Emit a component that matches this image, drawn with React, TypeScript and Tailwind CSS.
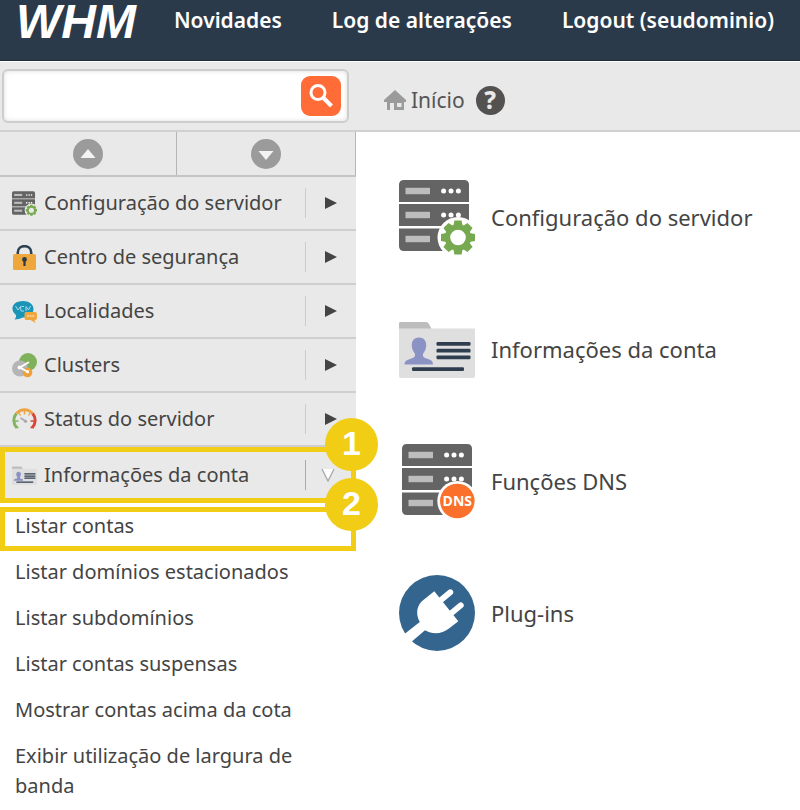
import React from 'react';

type IconProps = { className?: string };

function ServerBase({ x = 0 }: { x?: number }) {
  return (
    <g transform={`translate(${x} 0)`}>
      <path d="M5 1H65Q70 1 70 6V23H0V6Q0 1 5 1Z" fill="#646464" />
      <path d="M0 25H70V47H0Z" fill="#646464" />
      <path d="M0 49.5H70V67Q70 72 65 72H5Q0 72 0 67Z" fill="#646464" />
      {[12, 36, 60].map((y) => (
        <g key={y}>
          <rect x="6.5" y={y - 3.2} width="24.5" height="6.4" fill="#bdbdbd" />
          <circle cx="44.6" cy={y} r="2.5" fill="#fff" />
          <circle cx="52" cy={y} r="2.5" fill="#fff" />
          <circle cx="59.4" cy={y} r="2.5" fill="#fff" />
        </g>
      ))}
    </g>
  );
}

function ServerGearIcon({ className, halo = '#fff' }: IconProps & { halo?: string }) {
  return (
    <svg viewBox="0 0 76 76" className={className} aria-hidden="true">
      <ServerBase />
      <circle cx="59" cy="58.5" r="20.5" fill={halo} />
      {[0, 45, 90, 135].map((a) => (
        <path key={a} d="M55.4 41.5H62.6L63.6 47V70L62.6 75.5H55.4L54.4 70V47Z" fill="#77a951" transform={`rotate(${a} 59 58.5)`} />
      ))}
      <circle cx="59" cy="58.5" r="13.2" fill="#77a951" />
      <circle cx="59" cy="58.5" r="7.8" fill={halo} />
    </svg>
  );
}

function FolderIcon({ className }: IconProps) {
  return (
    <svg viewBox="0 0 76 76" className={className} aria-hidden="true">
      <path d="M0 12Q0 11 2 11H27Q29 11 30 13L32.5 18H0Z" fill="#bdbdbd" />
      <path d="M0 17.5H76V65Q76 67 74 67H2Q0 67 0 65Z" fill="#dfdfdf" />
      <path d="M20 26.5C25 26.5 27.5 30 27.2 35C27 39 25 41 24 43C23.5 46 25.5 47 29 48C33 49 34 51 34 53.6H5.5C5.5 51 7 49 11 48C14.5 47 16.4 46 16 43C15 41 13 39 12.8 35C12.5 30 15 26.5 20 26.5Z" fill="#8b93c4" />
      <g fill="#2f3e4e">
        <rect x="37.5" y="31" width="34" height="3.8" rx="1.2" />
        <rect x="37.5" y="37.8" width="34" height="3.8" rx="1.2" />
        <rect x="37.5" y="44.4" width="34" height="3.8" rx="1.2" />
        <rect x="13" y="56.2" width="52" height="3.8" rx="1.2" />
      </g>
    </svg>
  );
}

function ServerDnsIcon({ className }: IconProps) {
  return (
    <svg viewBox="0 0 76 76" className={className} aria-hidden="true">
      <ServerBase x={3} />
      <circle cx="58.3" cy="58" r="20" fill="#fff" />
      <circle cx="58.3" cy="58" r="17.3" fill="#fb712b" />
      <text x="58.3" y="63" textAnchor="middle" fontSize="14" fontWeight="700" fill="#fff" fontFamily="'Open Sans', sans-serif">DNS</text>
    </svg>
  );
}

function PlugIcon({ className }: IconProps) {
  return (
    <svg viewBox="0 0 76 76" className={className} aria-hidden="true">
      <circle cx="38" cy="38" r="38" fill="#33658e" />
      <path d="M35.3 16.3L59.3 46.2L50 53.5C43 59 34 60 26 55.3L11.7 67.5L3.5 60.5L20.8 47C16 38 18 29.5 25 24.5Z" fill="#fff" />
      <path d="M42 25L51.3 17.2M52.5 38L61.8 30.3" stroke="#fff" strokeWidth="5.8" strokeLinecap="round" />
    </svg>
  );
}

function LockIcon({ className }: IconProps) {
  return (
    <svg viewBox="0 0 25 25" className={className} aria-hidden="true">
      <path d="M5.8 10V7.5C5.8 -1 19.2 -1 19.2 7.5V10" fill="none" stroke="#2d4152" strokeWidth="2.6" />
      <rect x="1" y="9" width="23" height="16" rx="1.5" fill="#eda73d" />
      <circle cx="12.5" cy="14.5" r="2.4" fill="#2d3a45" />
      <path d="M11.4 15H13.6V21H11.4Z" fill="#2d3a45" />
    </svg>
  );
}

function LocalesIcon({ className }: IconProps) {
  return (
    <svg viewBox="0 0 25 25" className={className} aria-hidden="true">
      <path d="M11 2C17 2 21.5 5.5 21.5 10C21.5 15 17 18.5 11 18.5Q7 20.5 2.5 20.5Q4.5 18.5 4 16C-2.5 11 0 2 11 2Z" fill="#1a95b8" />
      <path d="M3.5 7L6 11L8.5 7.5L9 12H12M12 7.5H9.5M14 12V7.5L16.5 11L18.5 7" fill="none" stroke="#a8dbe8" strokeWidth="1" />
      <path d="M14 13H23Q25 13 25 15V19Q25 21 23 21H22.5L23.5 24L18.5 21H14Q12.5 21 12.5 19V15Q12.5 13 14 13Z" fill="#efa73d" />
      <path d="M15 17H22.5" stroke="#f8d79f" strokeWidth="1.5" strokeDasharray="2 .6" />
    </svg>
  );
}

function ClustersIcon({ className }: IconProps) {
  return (
    <svg viewBox="0 0 25 25" className={className} aria-hidden="true">
      <circle cx="16" cy="9" r="9" fill="#7fb15b" />
      <circle cx="8" cy="15.5" r="8" fill="#b5b5b5" />
      <circle cx="15.5" cy="19.5" r="4.8" fill="#eda13a" />
      <path d="M17 9L8 14.5L15 18.5" fill="none" stroke="#fff" strokeWidth="1.9" />
      <circle cx="7.5" cy="14.5" r="1.9" fill="#fff" />
      <circle cx="15.5" cy="18.7" r="1.6" fill="#fff" />
    </svg>
  );
}

function GaugeIcon({ className }: IconProps) {
  return (
    <svg viewBox="0 0 25 25" className={className} aria-hidden="true">
      <g fill="none" strokeWidth="3">
        <path d="M4.8 20.8C.8 16 1 10.5 4.4 6.6" stroke="#80b45f" />
        <path d="M4.4 6.6C9 1.5 16 1.5 20.6 6.6" stroke="#eda442" />
        <path d="M20.6 6.6C24 10.5 24.2 16 20.2 20.8" stroke="#d9463c" />
      </g>
      <path d="M3 14H6.5M3.5 20.5H6.5" stroke="#80b45f" strokeWidth="1.4" />
      <path d="M12.5 4V7.5M7 6L8.5 8.5M18 6L16.5 8.5" stroke="#eda442" strokeWidth="1.4" />
      <path d="M22 14H18.5M18.5 20.5H21.5" stroke="#d9463c" strokeWidth="1.4" />
      <path d="M8.5 11L14 14.3" stroke="#aaa" strokeWidth="1.6" />
      <circle cx="13.5" cy="14.3" r="1.6" fill="#aaa" />
    </svg>
  );
}

function HomeIcon({ className }: IconProps) {
  return (
    <svg viewBox="0 0 22 20" className={className} aria-hidden="true">
      <path d="M11 0L22 10V12H20V20H10V13H6V20H3V12H0V10ZM13 13V17H17.5V13Z" fill="#9b9b9b" fillRule="evenodd" />
    </svg>
  );
}

const menu = [
  { label: 'Configuração do servidor', icon: <ServerGearIcon className="size-[25px]" halo="#e9e9e9" /> },
  { label: 'Centro de segurança', icon: <LockIcon className="size-[25px]" /> },
  { label: 'Localidades', icon: <LocalesIcon className="size-[25px]" /> },
  { label: 'Clusters', icon: <ClustersIcon className="size-[25px]" /> },
  { label: 'Status do servidor', icon: <GaugeIcon className="size-[25px]" /> },
  { label: 'Informações da conta', icon: <FolderIcon className="size-[25px]" />, open: true },
];

const accountLinks = [
  'Listar contas',
  'Listar domínios estacionados',
  'Listar subdomínios',
  'Listar contas suspensas',
  'Mostrar contas acima da cota',
  'Exibir utilização de largura de banda',
];

const shortcuts = [
  { label: 'Configuração do servidor', icon: <ServerGearIcon className="size-[76px]" /> },
  { label: 'Informações da conta', icon: <FolderIcon className="size-[76px]" /> },
  { label: 'Funções DNS', icon: <ServerDnsIcon className="size-[76px]" /> },
  { label: 'Plug-ins', icon: <PlugIcon className="size-[76px]" /> },
];

function ScrollButton({ label, down, className = '' }: { label: string; down?: boolean; className?: string }) {
  return (
    <button type="button" aria-label={label} className={`flex items-center justify-center border-r border-[#b5b5b5] ${className}`}>
      <svg viewBox="0 0 30 30" className="size-[30px]" aria-hidden="true">
        <circle cx="15" cy="15" r="15" fill="#9b9b9b" />
        <path d={down ? 'M7.5 12H22.5L15 21Z' : 'M7.5 19H22.5L15 10Z'} fill="#f3f3f3" />
      </svg>
    </button>
  );
}

function Step({ n }: { n: number }) {
  return (
    <span className="absolute -right-[27px] -top-[34px] flex size-[53px] items-center justify-center rounded-full bg-[#f1cd15] pb-1 font-['Liberation_Sans',sans-serif] text-[34px] font-bold leading-none text-white">
      {n}
    </span>
  );
}

export default function App() {
  return (
    <div className="min-h-screen bg-white font-['Noto_Sans','Open_Sans',sans-serif] text-xl text-[#444]">
      <header className="flex h-[61px] items-start gap-[38px] border-b border-[#1f2d3b] bg-[#2b3a4a] pl-4 text-white">
        <a href="#" className="font-['Liberation_Sans',sans-serif] text-[48px] font-bold italic leading-[44px]">WHM</a>
        <nav className="flex gap-[50px] whitespace-nowrap pt-1 text-[21px] font-semibold leading-8">
          <a href="#">Novidades</a>
          <a href="#">Log de alterações</a>
          <a href="#">Logout (seudominio)</a>
        </nav>
      </header>

      <div className="flex h-[71px] items-center border-b-2 border-t border-b-[#d0d0d0] border-t-white bg-[#e9e9e9]">
        <form className="w-[356px] shrink-0 pl-[2px] pr-[7px]" onSubmit={(e) => e.preventDefault()}>
          <div className="flex h-[54px] items-center rounded-md border-2 border-[#cdcdcd] bg-white pr-[6px] shadow-[inset_0_0_5px_#ddd]">
            <input type="text" aria-label="Pesquisar" className="h-full min-w-0 flex-1 bg-transparent px-3 outline-none" />
            <button type="submit" aria-label="Buscar" className="flex size-10 items-center justify-center rounded-[9px] bg-[#ff6c37]">
              <svg viewBox="0 0 24 24" className="size-6" fill="none" stroke="#fff" aria-hidden="true">
                <circle cx="9" cy="8.5" r="7" strokeWidth="3" />
                <path d="M14 13.5L22.5 22" strokeWidth="4" />
              </svg>
            </button>
          </div>
        </form>
        <div className="flex items-center gap-[5px] pl-7 pt-2">
          <HomeIcon className="h-5 w-[22px]" />
          <a href="#" className="text-[21px] leading-8 text-[#555]">Início</a>
          <button type="button" aria-label="Ajuda" className="ml-[6px] flex size-[29px] items-center justify-center rounded-full bg-[#545151] text-2xl font-extrabold leading-none text-[#e9e9e9]">?</button>
        </div>
      </div>

      <div className="flex items-start">
        <aside className="w-[356px] shrink-0">
          <div className="flex h-[45px] border-b-2 border-[#c4c4c4] bg-[#e9e9e9]">
            <ScrollButton label="Recolher tudo" className="w-[177px]" />
            <ScrollButton label="Expandir tudo" down className="flex-1" />
          </div>
          <ul>
            {menu.map((item) => (
              <li key={item.label} className={item.open ? 'relative z-10' : ''}>
                <button type="button" aria-expanded={!!item.open} className={`flex w-full items-center bg-[#e9e9e9] pl-3 text-left ${item.open ? 'h-14' : 'h-[54px] border-b-2 border-[#cfcfcf]'}`}>
                  {item.icon}
                  <span className="flex-1 whitespace-nowrap pl-[7px]">{item.label}</span>
                  <span className={`flex h-[30px] w-[51px] items-center border-l pl-[19px] ${item.open ? 'border-[#aaa]' : 'border-[#ccc]'}`}>
                    {item.open ? (
                      <svg viewBox="0 0 14 14" className="-ml-1 size-[14px]" aria-hidden="true"><path d="M1 1H13L7 13Z" fill="#fff" /><path d="M1 1L7 13L13 1" fill="none" stroke="#aaa" strokeWidth="1.4" /></svg>
                    ) : (
                      <svg viewBox="0 0 12 12" className="size-3" aria-hidden="true"><path d="M0 0L12 6L0 12Z" fill="#444" /></svg>
                    )}
                  </span>
                </button>
                {item.open && <span className="pointer-events-none absolute inset-0 border-[5px] border-[#f1cd15]"><Step n={1} /></span>}
              </li>
            ))}
          </ul>
          <ul className="leading-[30px]">
            {accountLinks.map((label, i) => (
              <li key={label} className={`py-2 pl-[15px] pr-10 ${i === 0 ? 'relative z-10' : ''}`}>
                <a href="#">{label}</a>
                {i === 0 && <span className="pointer-events-none absolute inset-x-0 -bottom-[2px] top-1 border-[5px] border-[#f1cd15]"><Step n={2} /></span>}
              </li>
            ))}
          </ul>
        </aside>

        <main className="flex-1 pl-[43px] pt-[19px] text-[22px]">
          {shortcuts.map((s) => (
            <a key={s.label} href="#" className="flex h-[132px] items-center gap-4">
              {s.icon}
              <span>{s.label}</span>
            </a>
          ))}
        </main>
      </div>
    </div>
  );
}
